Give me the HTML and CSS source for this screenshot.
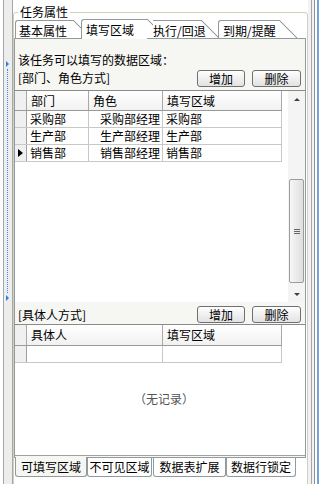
FILE: index.html
```html
<!DOCTYPE html>
<html lang="zh">
<head>
    <meta charset="UTF-8">
    <title>任务属性</title>
    <link rel="stylesheet" href="styles.css">
</head>
<body>
    <div class="window">
        <div class="edge-left"></div>
        <div class="splitter">
            <span class="split-arrow"></span>
            <span class="split-dots"></span>
            <span class="split-arrow"></span>
        </div>
        <fieldset class="group">
            <legend>任务属性</legend>
            <div class="tabs">
                <div class="tab tab-1">基本属性</div>
                <div class="tab tab-2 active">填写区域</div>
                <div class="tab tab-3">执行/回退</div>
                <div class="tab tab-4">到期/提醒</div>
            </div>
            <div class="panel">
                <div class="caption">该任务可以填写的数据区域：</div>
                <div class="toolbar">
                    <span class="toolbar-label">[部门、角色方式]</span>
                    <button class="btn">增加</button>
                    <button class="btn btn-wide">删除</button>
                </div>
                <div class="grid grid-1">
                    <div class="table">
                        <div class="row head">
                            <div class="cell ind"></div>
                            <div class="cell">部门</div>
                            <div class="cell">角色</div>
                            <div class="cell">填写区域</div>
                        </div>
                        <div class="row">
                            <div class="cell ind"></div>
                            <div class="cell">采购部</div>
                            <div class="cell right">采购部经理</div>
                            <div class="cell">采购部</div>
                        </div>
                        <div class="row">
                            <div class="cell ind"></div>
                            <div class="cell">生产部</div>
                            <div class="cell right">生产部经理</div>
                            <div class="cell">生产部</div>
                        </div>
                        <div class="row">
                            <div class="cell ind"><span class="pointer"></span></div>
                            <div class="cell">销售部</div>
                            <div class="cell right">销售部经理</div>
                            <div class="cell">销售部</div>
                        </div>
                    </div>
                    <div class="vscroll">
                        <div class="sb-btn"><span class="tri-up"></span></div>
                        <div class="sb-track">
                            <div class="sb-thumb"><span class="grip"></span></div>
                        </div>
                        <div class="sb-btn"><span class="tri-down"></span></div>
                    </div>
                </div>
                <div class="toolbar toolbar-2">
                    <span class="toolbar-label">[具体人方式]</span>
                    <button class="btn">增加</button>
                    <button class="btn btn-wide">删除</button>
                </div>
                <div class="grid grid-2">
                    <div class="row row-2 head head-2">
                        <div class="cell ind"></div>
                        <div class="cell">具体人</div>
                        <div class="cell">填写区域</div>
                    </div>
                    <div class="row row-2">
                        <div class="cell ind"></div>
                        <div class="cell"></div>
                        <div class="cell"></div>
                    </div>
                    <div class="empty">（无记录）</div>
                </div>
            </div>
            <div class="btabs">
                <div class="btab btab-1 active">可填写区域</div>
                <div class="btab btab-2">不可见区域</div>
                <div class="btab btab-3">数据表扩展</div>
                <div class="btab btab-4">数据行锁定</div>
            </div>
        </fieldset>
        <div class="edge-right"></div>
    </div>
</body>
</html>
```

FILE: styles.css
```css
body{
    margin: 0;
    background: #fff;
    font: 12px/14px "Noto Sans CJK SC", sans-serif;
    color: #000;
    overflow: hidden;
}
.window{
    display: flex;
    height: 484px;
}
.edge-left{
    width: 3px;
}
.splitter{
    width: 10px;
    box-sizing: border-box;
    border-left: 1px solid #a7a7a7;
    border-right: 1px solid #a7a7a7;
    background: #ededed;
    display: flex;
    flex-direction: column;
    align-items: flex-start;
    padding-top: 61px;
}
.split-arrow{
    width: 0;
    height: 0;
    margin-left: 2px;
    border-left: 3px solid #2f7fe0;
    border-top: 3px solid transparent;
    border-bottom: 3px solid transparent;
}
.split-dots{
    width: 0;
    height: 224px;
    margin: 2px 0 2px 3px;
    border-left: 1px dotted #3a8ee6;
}
.edge-right{
    width: 17px;
    background: linear-gradient(to right, #f2f2f2 0 3px, #a6a6a6 3px 4px, #f2f2f2 4px 6px, #8e8e8e 6px 7px, #fff 7px 9px, #74a3dc 9px 11px, #fff 11px);
}

/* group box */
.group{
    box-sizing: border-box;
    width: 295px;
    height: 490px;
    min-width: 0;
    margin: 5px 0 0;
    padding: 0 1px 0 0;
    border: 1px solid #d0d0bf;
    border-radius: 3px;
}
.group legend{
    margin-left: 4px;
    padding: 0 2px;
    line-height: 14px;
}

/* top tabs */
.tabs{
    position: relative;
    z-index: 1;
    display: flex;
    align-items: flex-end;
    height: 19px;
}
.tab{
    position: relative;
    box-sizing: border-box;
    height: 18px;
    padding-top: 3px;
    border-top: 1px solid #919b9c;
    background: #fff;
    white-space: nowrap;
}
.tab::after{
    content: '';
    position: absolute;
    top: -1px;
    right: -18px;
    width: 18px;
    height: 18px;
    background: linear-gradient(to top right, transparent calc(50% - 0.8px), #919b9c calc(50% - 0.3px), #919b9c calc(50% + 0.3px), transparent calc(50% + 0.8px));
}
.tab-1{
    z-index: 1;
    width: 58px;
    margin-left: 1px;
    padding-left: 3px;
    border-left: 1px solid #919b9c;
    border-top-left-radius: 3px;
}
.tab-2{
    z-index: 2;
    width: 66px;
    margin-left: 8px;
    padding-left: 4px;
    border-left: 1px solid #919b9c;
    border-top-left-radius: 3px;
}
.tab-3{
    z-index: 3;
    width: 48px;
    margin-left: 6px;
}
.tab-4{
    z-index: 4;
    width: 61px;
    margin-left: 17px;
    padding-left: 4px;
    border-left: 1px solid #919b9c;
    border-top-left-radius: 3px;
}
.tab.active{
    height: 20px;
    margin-bottom: -1px;
}

/* tab page */
.panel{
    box-sizing: border-box;
    height: 420px;
    border: 1px solid #919b9c;
    background: #f6f6f3;
}
.caption{
    margin-top: 14px;
    padding-left: 3px;
}
.toolbar{
    display: flex;
    align-items: center;
    gap: 7px;
    height: 20px;
    margin-top: 1px;
    padding: 0 4px 0 3px;
}
.toolbar-label{
    flex: 1;
}
.toolbar-2{
    height: 19px;
    margin-top: 3px;
}
.btn{
    box-sizing: border-box;
    width: 48px;
    height: 17px;
    padding: 0;
    border: 1px solid #707070;
    border-radius: 3px;
    background: linear-gradient(#fefefe, #e2e2e2);
    font: inherit;
    line-height: 13px;
    color: #000;
}
.btn-wide{
    width: 49px;
}

/* grids */
.grid{
    box-sizing: border-box;
    background: #fff;
    border-top: 1px solid #8a8a8a;
}
.grid-1{
    display: flex;
    height: 212px;
    margin-top: 2px;
}
.table{
    width: 273px;
}
.row{
    display: grid;
    grid-template-columns: 12px 62px 74px 119px;
    width: 267px;
    height: 17px;
    box-sizing: border-box;
    border-bottom: 1px solid #c8c8c8;
}
.row-2{
    grid-template-columns: 12px 136px 119px;
}
.cell{
    position: relative;
    padding: 1px 0 0 3px;
    border-right: 1px solid #c8c8c8;
    white-space: nowrap;
    overflow: hidden;
}
.cell.right{
    padding: 1px 2px 0 0;
    text-align: right;
}
.cell.ind{
    padding: 0;
    background: #f0f0f0;
    border-right-color: #a0a0a0;
}
.head{
    height: 20px;
    border-bottom-color: #9a9a9a;
    background: linear-gradient(#fff, #f1f1f1);
}
.head .cell{
    padding: 3px 0 0 4px;
    border-right-color: #a8a8a8;
}
.head .cell.ind{
    padding: 0;
}
.head-2{
    height: 21px;
}
.pointer{
    position: absolute;
    top: 4px;
    left: 3px;
    border-left: 5px solid #000;
    border-top: 4px solid transparent;
    border-bottom: 4px solid transparent;
}
.vscroll{
    display: flex;
    flex-direction: column;
    width: 17px;
    background: #f4f4f4;
}
.sb-btn{
    display: flex;
    align-items: center;
    justify-content: center;
    height: 16px;
}
.tri-up{
    border-bottom: 3px solid #404040;
    border-left: 3px solid transparent;
    border-right: 3px solid transparent;
}
.tri-down{
    border-top: 3px solid #404040;
    border-left: 3px solid transparent;
    border-right: 3px solid transparent;
}
.sb-track{
    flex: 1;
}
.sb-thumb{
    display: flex;
    align-items: center;
    justify-content: center;
    box-sizing: border-box;
    height: 104px;
    margin: 72px 1px 0;
    border: 1px solid #9c9c9c;
    border-radius: 2px;
    background: linear-gradient(to right, #f7f7f7, #dedede);
}
.grip{
    width: 6px;
    height: 5px;
    background: repeating-linear-gradient(#666 0 1px, transparent 1px 2px);
}
.grid-2{
    height: 132px;
    border-bottom: 1px solid #a0a0a0;
}
.empty{
    padding: 29px 0 0 8px;
    text-align: center;
    color: #555;
}

/* bottom tabs */
.btabs{
    display: flex;
    height: 20px;
}
.btab{
    box-sizing: border-box;
    height: 19px;
    padding-top: 2px;
    border: 1px solid #919b9c;
    border-top: none;
    border-radius: 0 0 3px 3px;
    background: #fff;
    text-align: center;
    white-space: nowrap;
}
.btab.active{
    height: 20px;
    margin-top: -1px;
    padding-top: 3px;
    background: #f6f6f3;
}
.btab-1{
    width: 72px;
    margin-left: 1px;
}
.btab-2{
    width: 65px;
}
.btab-3{
    width: 73px;
    margin-left: 1px;
}
.btab-4{
    width: 70px;
}
```
